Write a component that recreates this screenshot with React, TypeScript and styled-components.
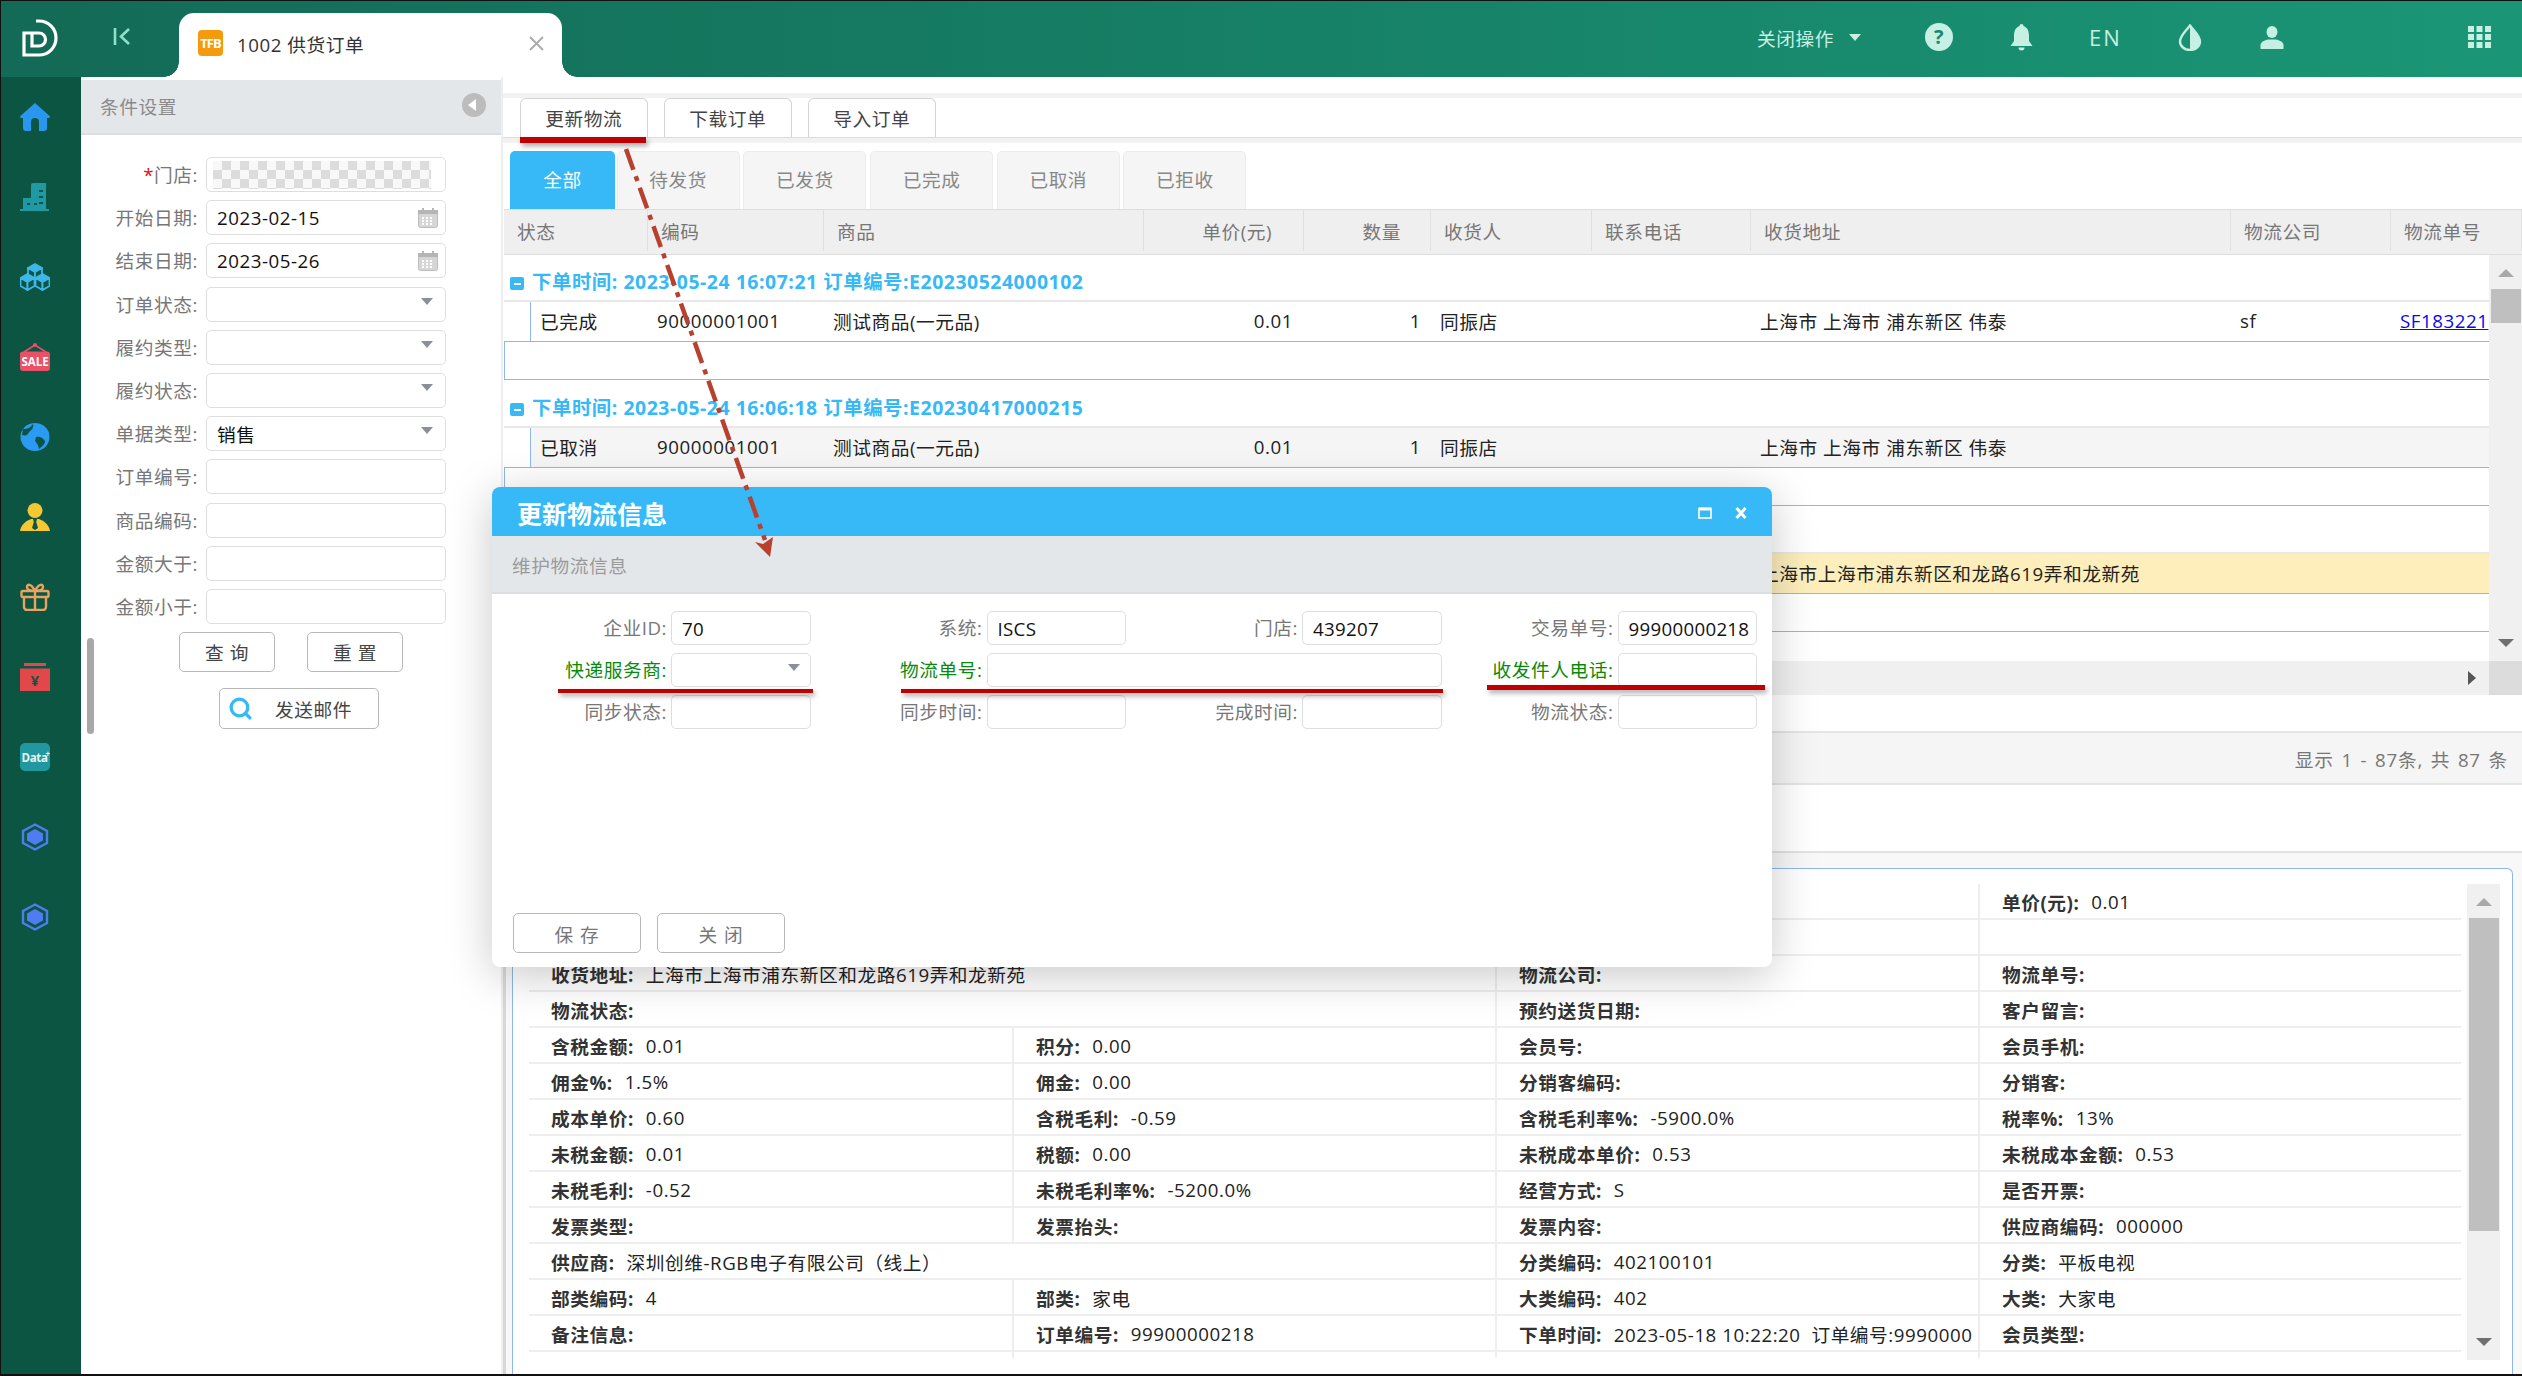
import { Fragment } from "react";
import styled, { createGlobalStyle } from "styled-components";
import { Search } from "lucide-react";

const GlobalStyle = createGlobalStyle`
  html, body {
    margin: 0;
    padding: 0;
    background: #fff;
  }
  body {
    font-family: "Open Sans", "Noto Sans CJK SC", sans-serif;
    font-size: 18.7px;
    letter-spacing: 0.55px;
    color: #222;
    overflow: hidden;
  }
  * {
    box-sizing: border-box;
  }
`;

const Frame = styled.div`
  position: relative;
  width: 2522px;
  height: 1376px;
  border-top: 1px solid #111;
  border-left: 1px solid #111;
  border-bottom: 2px solid #111;
  display: flex;
  flex-direction: column;
  overflow: hidden;
`;

const TopBar = styled.header`
  height: 76px;
  flex: none;
  display: flex;
  background: linear-gradient(90deg, #136a56, #1a9676);
`;

const LogoCell = styled.div`
  width: 80px;
  display: flex;
  align-items: center;
  padding-left: 21px;
  padding-bottom: 2px;
`;

const CollapseCell = styled.div`
  width: 98px;
  display: flex;
  align-items: center;
  padding-left: 32px;
  padding-bottom: 6px;
`;

const PageTab = styled.div`
  position: relative;
  width: 383px;
  margin-top: 12px;
  background: #fff;
  border-radius: 15px 15px 0 0;
  display: flex;
  align-items: center;
  padding: 0 18px 4px 19px;
  &::before,
  &::after {
    content: "";
    position: absolute;
    bottom: 0;
    width: 15px;
    height: 15px;
  }
  &::before {
    left: -15px;
    background: radial-gradient(circle at 0 0, transparent 14.5px, #fff 15px);
  }
  &::after {
    right: -15px;
    background: radial-gradient(circle at 100% 0, transparent 14.5px, #fff 15px);
  }
`;

const TabBadge = styled.span`
  width: 25px;
  height: 26px;
  border-radius: 4px;
  background: #f59a0c;
  color: #fff;
  font-size: 13px;
  font-weight: 700;
  letter-spacing: -1px;
  display: flex;
  align-items: center;
  justify-content: center;
`;

const TabTitle = styled.span`
  margin-left: 14px;
  flex: 1;
  color: #333;
`;

const TopActions = styled.div`
  margin-left: auto;
  display: flex;
  align-items: center;
  padding: 0 31px 4px 0;
  color: #c5f0e3;
`;

const LangText = styled.span`
  margin-left: 56px;
  font-size: 22px;
  letter-spacing: 2px;
  width: 32px;
`;

const ActionIcon = styled.span<{ $left: number }>`
  margin-left: ${(p) => p.$left}px;
  display: flex;
`;

const Workspace = styled.div`
  flex: 1;
  min-height: 0;
  display: flex;
`;

const SideNav = styled.nav`
  width: 80px;
  flex: none;
  background: #0c5543;
  display: flex;
  flex-direction: column;
`;

const NavItem = styled.div`
  height: 80px;
  display: flex;
  align-items: center;
  justify-content: center;
  padding-right: 12px;
`;

const FilterPanel = styled.aside`
  position: relative;
  width: 422px;
  flex: none;
  padding-top: 3px;
  border-right: 2px solid #eee;
`;

const FilterHead = styled.div`
  height: 55px;
  background: #e4e7ea;
  border-bottom: 2px solid #dcdfe2;
  display: flex;
  align-items: center;
  justify-content: space-between;
  padding: 0 15px 3px 19px;
  color: #8a8a8a;
`;

const BackDot = styled.span`
  width: 24px;
  height: 24px;
  border-radius: 50%;
  background: #bcbcbc;
  display: flex;
  align-items: center;
  justify-content: center;
  &::before {
    content: "";
    margin-right: 4px;
    border-style: solid;
    border-width: 6px 8px 6px 0;
    border-color: transparent #fff transparent transparent;
  }
`;

const FilterForm = styled.div`
  display: grid;
  grid-template-columns: 117px 240px;
  column-gap: 8px;
  row-gap: 8.2px;
  grid-auto-rows: 35px;
  padding-top: 22px;
`;

const FilterLabel = styled.label`
  text-align: right;
  line-height: 35px;
  color: #777;
  white-space: nowrap;
`;

const Star = styled.span`
  color: #e01010;
`;

const FieldBox = styled.div`
  border: 1.5px solid #dedede;
  border-radius: 5px;
  background: #fff;
  display: flex;
  align-items: center;
  justify-content: space-between;
  padding: 0 10px;
  color: #111;
  white-space: nowrap;
  overflow: hidden;
`;

const Masked = styled.div`
  width: 100%;
  height: 28px;
  margin: 0 -5px 0 -4px;
  flex: none;
  background: conic-gradient(#dcdcdc 25%, #f8f8f8 0 50%, #dcdcdc 0 75%, #f8f8f8 0) 0 0 / 18px 18px;
`;

const Caret = styled.span`
  margin: -6px 2px 0 0;
  border-style: solid;
  border-width: 7px 6px 0 6px;
  border-color: #8a8f99 transparent transparent transparent;
`;

const TopCaret = styled(Caret)`
  margin: 0 0 0 15px;
  border-top-color: #c5f0e3;
`;

const CalendarSlot = styled.span`
  display: flex;
  margin-right: -3px;
`;

const PanelButtons = styled.div`
  display: flex;
  gap: 32px;
  padding: 8px 0 0 98px;
`;

const PlainButton = styled.button`
  width: 96px;
  height: 40px;
  background: #fff;
  border: 1.5px solid #b8b8b8;
  border-radius: 5px;
  font: inherit;
  letter-spacing: inherit;
  color: #444;
  padding: 0;
`;

const MailButton = styled(PlainButton)`
  width: 160px;
  height: 41px;
  margin: 16px 0 0 138px;
  display: flex;
  align-items: center;
  padding-left: 8px;
  gap: 22px;
`;

const PanelScroll = styled.span`
  position: absolute;
  left: 6px;
  top: 561px;
  width: 7px;
  height: 96px;
  border-radius: 4px;
  background: #a8a8a8;
`;

const Main = styled.main`
  flex: 1;
  min-width: 0;
  display: flex;
  flex-direction: column;
`;

const WhiteStrip = styled.div`
  height: 16px;
  flex: none;
  background: #fff;
`;

const GreyStrip = styled.div`
  height: 5px;
  flex: none;
  background: #f2f2f2;
`;

const Toolbar = styled.div`
  height: 40px;
  flex: none;
  display: flex;
  gap: 16.5px;
  padding-left: 17px;
  border-bottom: 1px solid #ddd;
`;

const ToolButton = styled.button`
  position: relative;
  width: 127.5px;
  height: 39px;
  background: #fff;
  border: 1.5px solid #d4d4d4;
  border-bottom: none;
  border-radius: 6px 6px 0 0;
  font: inherit;
  letter-spacing: inherit;
  color: #444;
  padding: 0 0 2px;
`;

const RedMark = styled.span<{ $left: number; $top: number; $width: number; $height: number }>`
  position: absolute;
  left: ${(p) => p.$left}px;
  top: ${(p) => p.$top}px;
  width: ${(p) => p.$width}px;
  height: ${(p) => p.$height}px;
  background: #c00000;
  box-shadow: 2px 3px 5px rgba(0, 0, 0, 0.35);
  z-index: 3;
`;

const TabStrip = styled.div`
  height: 66px;
  flex: none;
  display: flex;
  gap: 3.7px;
  padding: 8px 0 0 7px;
`;

const StatusTab = styled.div<{ $active?: boolean }>`
  width: ${(p) => (p.$active ? "105px" : "123px")};
  margin-right: ${(p) => (p.$active ? "-2px" : "0")};
  background: ${(p) => (p.$active ? "#37b9f7" : "#f5f5f5")};
  color: ${(p) => (p.$active ? "#fff" : "#888")};
  border: 1px solid ${(p) => (p.$active ? "#37b9f7" : "#ececec")};
  border-bottom: none;
  border-radius: 5px 5px 0 0;
  display: flex;
  align-items: center;
  justify-content: center;
  padding-bottom: 4px;
`;

const colTemplate = "144px 176px 320px 160px 127px 161px 159px 480px 160px 131px";

const HeadRow = styled.div`
  height: 46px;
  flex: none;
  margin-left: 1px;
  display: grid;
  grid-template-columns: ${colTemplate};
  background: #efefef;
  border-top: 1.5px solid #dedede;
  border-bottom: 1.5px solid #dedede;
  color: #777;
`;

const HeadCell = styled.div<{ $right?: number }>`
  display: flex;
  align-items: center;
  justify-content: ${(p) => (p.$right ? "flex-end" : "flex-start")};
  padding: ${(p) => (p.$right ? `0 ${p.$right}px 0 0` : "0 0 0 13px")};
  border-right: 1px solid #e0e0e0;
  margin: 0 0 3px;
  white-space: nowrap;
`;

const TableBody = styled.div`
  height: 406px;
  flex: none;
  display: flex;
  margin-left: 1px;
`;

const RowsClip = styled.div`
  flex: 1;
  min-width: 0;
  overflow: hidden;
`;

const GroupRow = styled.div`
  height: 48px;
  border-bottom: 2px solid #e8e8e8;
  display: flex;
  align-items: flex-end;
  padding: 0 0 5px 6px;
  gap: 8px;
  color: #37b9f7;
  font-size: 19.4px;
  font-weight: 700;
  white-space: nowrap;
  &:first-child {
    height: 47px;
  }
`;

const MinusBox = styled.span`
  width: 14px;
  height: 13px;
  margin-bottom: 5px;
  border-radius: 2px;
  background: #37b9f7;
  display: flex;
  align-items: center;
  justify-content: center;
  &::before {
    content: "";
    width: 7px;
    height: 2px;
    background: #fff;
  }
`;

const DataRow = styled.div<{ $tone?: "plain" | "grey" | "yellow" }>`
  height: 39px;
  margin-left: 26px;
  display: grid;
  grid-template-columns: 118px 176px 320px 160px 127px 161px 159px 480px 160px 131px;
  border-left: 1px solid #8cb8ec;
  background: ${(p) => (p.$tone === "grey" ? "#f5f5f5" : p.$tone === "yellow" ? "#fdeebb" : "#fff")};
  color: #222;
`;

const DataCell = styled.div<{ $right?: number; $lead?: boolean }>`
  display: flex;
  align-items: center;
  justify-content: ${(p) => (p.$right ? "flex-end" : "flex-start")};
  padding: ${(p) =>
    p.$right ? `0 ${p.$right}px 2px 0` : `0 0 2px ${p.$lead ? 9 : 8}px`};
  white-space: nowrap;
`;

const TrackLink = styled.a`
  color: #0a0ae6;
  text-decoration: underline;
`;

const EmptyRow = styled.div`
  height: 39px;
  border: 1.5px solid #8cb8ec;
  border-right: none;
`;

const ScrollTrack = styled.div`
  width: 33px;
  flex: none;
  background: #f0f0f0;
  display: flex;
  flex-direction: column;
  align-items: center;
  padding: 14px 0;
  &::after {
    content: "";
    margin-top: auto;
    border-style: solid;
    border-width: 8px 8px 0 8px;
    border-color: #6f6f6f transparent transparent transparent;
  }
`;

const ScrollUp = styled.span`
  border-style: solid;
  border-width: 0 8px 8px 8px;
  border-color: transparent transparent #a9a9a9 transparent;
`;

const ScrollThumb = styled.span<{ $height: number }>`
  width: 30px;
  height: ${(p) => p.$height}px;
  margin-top: 12px;
  background: #bfbfbf;
`;

const HScroll = styled.div`
  height: 34px;
  flex: none;
  margin-left: 1px;
  background: #f0f0f0;
  display: flex;
  justify-content: flex-end;
  align-items: center;
`;

const HArrow = styled.span`
  margin-right: 13px;
  border-style: solid;
  border-width: 7px 0 7px 8px;
  border-color: transparent transparent transparent #555;
`;

const HCorner = styled.span`
  width: 33px;
  height: 34px;
  background: #dcdcdc;
`;

const BlankGap = styled.div<{ $height: number; $line?: boolean }>`
  height: ${(p) => p.$height}px;
  flex: none;
  background: #fff;
  border-bottom: ${(p) => (p.$line ? "2px solid #e2e2e2" : "none")};
`;

const Pager = styled.div`
  height: 54px;
  flex: none;
  background: #f5f5f5;
  border-top: 2px solid #e4e4e4;
  border-bottom: 2px solid #e4e4e4;
  display: flex;
  align-items: center;
  justify-content: flex-end;
  padding-right: 14px;
  color: #777;
  letter-spacing: 0.8px;
  word-spacing: 2px;
`;

const DetailWrap = styled.div`
  flex: 1;
  min-height: 0;
  display: flex;
  background: #f8f8f8;
  padding: 15px 9px 0 9px;
  box-shadow: inset 3px 0 0 #d8d8d8;
`;

const DetailPanel = styled.section`
  flex: 1;
  min-width: 0;
  background: #fff;
  border: 1.5px solid #8cb8ec;
  border-bottom: none;
  border-radius: 0 6px 0 0;
  display: flex;
  padding: 15px 12px 14px 16px;
  gap: 6px;
`;

const DetailRows = styled.div`
  width: 1932px;
  flex: none;
  overflow: hidden;
`;

const DetailRow = styled.div`
  height: 36px;
  display: grid;
  grid-template-columns: repeat(4, 1fr);
  border-bottom: 2px solid #eeeeee;
`;

const DetailCell = styled.div<{ $span?: number; $first?: boolean }>`
  grid-column: span ${(p) => p.$span ?? 1};
  min-width: 0;
  display: flex;
  align-items: center;
  padding-left: 22px;
  border-left: ${(p) => (p.$first ? "none" : "2px solid #eeeeee")};
  white-space: pre;
  overflow: hidden;
  color: #222;
`;

const FieldName = styled.b`
  font-weight: 700;
  color: #333;
  margin-right: 12px;
`;

const DetailStub = styled.div`
  height: 6px;
  display: grid;
  grid-template-columns: repeat(4, 1fr);
  & > span + span {
    border-left: 2px solid #eeeeee;
  }
`;

const ModalShell = styled.div`
  position: absolute;
  left: 491px;
  top: 486px;
  width: 1280px;
  height: 480px;
  background: #fff;
  border-radius: 8px;
  box-shadow: 0 8px 45px rgba(0, 0, 0, 0.22);
  display: flex;
  flex-direction: column;
  overflow: hidden;
  z-index: 5;
`;

const ModalHead = styled.div`
  height: 49px;
  flex: none;
  background: #37b9f7;
  color: #fff;
  display: flex;
  align-items: center;
  padding: 2px 25px 0 25px;
  font-size: 25px;
  font-weight: 700;
  letter-spacing: 0;
`;

const ModalTools = styled.div`
  margin-left: auto;
  display: flex;
  align-items: center;
  gap: 23px;
`;

const ModalSub = styled.div`
  height: 58px;
  flex: none;
  background: #e4e7ea;
  border-bottom: 2px solid #dcdfe2;
  display: flex;
  align-items: center;
  padding-left: 20px;
  color: #9a9a9a;
`;

const ModalForm = styled.div`
  flex: 1;
  display: grid;
  grid-template-columns: repeat(4, 172px 139.5px);
  column-gap: 2px;
  grid-auto-rows: 34px;
  row-gap: 8px;
  padding: 17px 0 0 5px;
`;

const ModalLabel = styled.label<{ $accent?: boolean }>`
  text-align: right;
  line-height: 34px;
  white-space: nowrap;
  padding-right: 2px;
  color: ${(p) => (p.$accent ? "#0a8a0a" : "#777")};
`;

const ModalField = styled(FieldBox)<{ $span?: number }>`
  grid-column: span ${(p) => p.$span ?? 1};
  padding: 0 8px 0 10px;
  letter-spacing: 0.3px;
`;

const ModalFoot = styled.div`
  flex: none;
  display: flex;
  gap: 16px;
  padding: 0 0 14px 21px;
`;

const FootButton = styled(PlainButton)`
  width: 128px;
  color: #777;
  letter-spacing: 1px;
`;

const ArrowLayer = styled.svg`
  position: absolute;
  left: -1px;
  top: -1px;
  width: 2522px;
  height: 1376px;
  pointer-events: none;
  z-index: 6;
`;

const columns = [
  { name: "状态" },
  { name: "编码" },
  { name: "商品" },
  { name: "单价(元)", right: 31 },
  { name: "数量", right: 29 },
  { name: "收货人" },
  { name: "联系电话" },
  { name: "收货地址" },
  { name: "物流公司" },
  { name: "物流单号" },
];

type DetailEntry = { k: string; v?: string; span?: number };

const detailRows: DetailEntry[][] = [
  [{ k: "", span: 3 }, { k: "单价(元):", v: "0.01" }],
  [{ k: "", span: 3 }, { k: "" }],
  [{ k: "收货地址:", v: "上海市上海市浦东新区和龙路619弄和龙新苑", span: 2 }, { k: "物流公司:" }, { k: "物流单号:" }],
  [{ k: "物流状态:", span: 2 }, { k: "预约送货日期:" }, { k: "客户留言:" }],
  [{ k: "含税金额:", v: "0.01" }, { k: "积分:", v: "0.00" }, { k: "会员号:" }, { k: "会员手机:" }],
  [{ k: "佣金%:", v: "1.5%" }, { k: "佣金:", v: "0.00" }, { k: "分销客编码:" }, { k: "分销客:" }],
  [{ k: "成本单价:", v: "0.60" }, { k: "含税毛利:", v: "-0.59" }, { k: "含税毛利率%:", v: "-5900.0%" }, { k: "税率%:", v: "13%" }],
  [{ k: "未税金额:", v: "0.01" }, { k: "税额:", v: "0.00" }, { k: "未税成本单价:", v: "0.53" }, { k: "未税成本金额:", v: "0.53" }],
  [{ k: "未税毛利:", v: "-0.52" }, { k: "未税毛利率%:", v: "-5200.0%" }, { k: "经营方式:", v: "S" }, { k: "是否开票:" }],
  [{ k: "发票类型:" }, { k: "发票抬头:" }, { k: "发票内容:" }, { k: "供应商编码:", v: "000000" }],
  [{ k: "供应商:", v: "深圳创维-RGB电子有限公司（线上）", span: 2 }, { k: "分类编码:", v: "402100101" }, { k: "分类:", v: "平板电视" }],
  [{ k: "部类编码:", v: "4" }, { k: "部类:", v: "家电" }, { k: "大类编码:", v: "402" }, { k: "大类:", v: "大家电" }],
  [{ k: "备注信息:" }, { k: "订单编号:", v: "99900000218" }, { k: "下单时间:", v: "2023-05-18 10:22:20  订单编号:9990000" }, { k: "会员类型:" }],
];

const Logo = () => (
  <svg width="38" height="38" viewBox="0 0 38 38" fill="none" stroke="#fff" strokeWidth="3.2">
    <path d="M14 2 h3 a17 17 0 0 1 0 34 H2 V14 H17 a6.5 6.5 0 0 1 0 13 H10 V15" />
  </svg>
);

const CollapseIcon = () => (
  <svg width="18" height="17" viewBox="0 0 18 17" fill="none" stroke="#8fe0c8" strokeWidth="2.6">
    <path d="M2 0 V17 M16 1 L8 8.5 L16 16" />
  </svg>
);

const mint = "#c5f0e3";

const HelpIcon = () => (
  <svg width="28" height="28" viewBox="0 0 28 28">
    <circle cx="14" cy="14" r="14" fill={mint} />
    <text x="14" y="21" textAnchor="middle" fontSize="20" fontWeight="700" fill="#1a8a6e" fontFamily="Open Sans">?</text>
  </svg>
);

const BellIcon = () => (
  <svg width="23" height="27" viewBox="0 0 23 27" fill={mint}>
    <path d="M11.5 0 a2 2 0 0 1 2 2 C18 3.5 19 8 19 12 V17 L22.5 22 H0.5 L4 17 V12 C4 8 5 3.5 9.5 2 a2 2 0 0 1 2 -2 Z" />
    <path d="M8.5 23.5 H14.5 a3 3 0 0 1 -6 0 Z" />
  </svg>
);

const ContrastIcon = () => (
  <svg width="24" height="27" viewBox="0 0 24 27" fill="none">
    <path d="M12 1.5 C17 8 22 12 22 17.5 A10 8.5 0 0 1 2 17.5 C2 12 7 8 12 1.5 Z" fill="none" stroke={mint} strokeWidth="2.4" />
    <path d="M12 1.5 C17 8 22 12 22 17.5 A10 8.5 0 0 1 12 26 Z" fill={mint} />
  </svg>
);

const UserIcon = () => (
  <svg width="24" height="23" viewBox="0 0 24 23" fill={mint}>
    <ellipse cx="12" cy="6" rx="5.5" ry="6" />
    <path d="M0.5 23 V19 C0.5 16 5 14 8 13.5 H16 C19 14 23.5 16 23.5 19 V23 Z" />
  </svg>
);

const GridIcon = () => (
  <svg width="23" height="22" viewBox="0 0 23 22" fill={mint}>
    {[0, 8.5, 17].map((x) =>
      [0, 8, 16].map((y) => <rect key={`${x}-${y}`} x={x} y={y} width="6" height="6" />)
    )}
  </svg>
);

const HomeIcon = () => (
  <svg width="30" height="28" viewBox="0 0 30 28" fill="#2a97ee">
    <path d="M15 0 L29.6 13 a1.2 1.2 0 0 1 -0.8 2 H27 V25 a3 3 0 0 1 -3 3 H19 V19 a4 4 0 0 0 -8 0 V28 H6 a3 3 0 0 1 -3 -3 V15 H1.2 a1.2 1.2 0 0 1 -0.8 -2 Z" />
  </svg>
);

const BuildingIcon = () => (
  <svg width="30" height="28" viewBox="0 0 30 28">
    <path d="M11 2 Q11 0 13 0 H26 V26 H29 V28 H0 V26 H3 V15 H11 Z" fill="#1f99a4" />
    <g fill="#0c5543">
      <rect x="19" y="7" width="4" height="2" />
      <rect x="19" y="13" width="4" height="2" />
      <rect x="19" y="19" width="4" height="2" />
      <rect x="7" y="20" width="3" height="2" />
      <rect x="14" y="20" width="3" height="2" />
    </g>
  </svg>
);

const Cube = ({ x, y }: { x: number; y: number }) => (
  <g transform={`translate(${x} ${y})`} stroke="#3db6e8" strokeWidth="1.8" strokeLinejoin="round">
    <path d="M0 -8 L7 -4 L0 0 L-7 -4 Z" fill="#3db6e8" />
    <path d="M-7 -4 L0 0 V8 L-7 4 Z" fill="#0c5543" />
    <path d="M7 -4 L0 0 V8 L7 4 Z" fill="#0c5543" />
  </g>
);

const CubesIcon = () => (
  <svg width="30" height="28" viewBox="0 0 30 28">
    <Cube x={15} y={9} />
    <Cube x={7.5} y={19} />
    <Cube x={22.5} y={19} />
  </svg>
);

const SaleIcon = () => (
  <svg width="30" height="28" viewBox="0 0 30 28">
    <circle cx="15" cy="2" r="2" fill="#ea5066" />
    <path d="M4 9 L15 2 L26 9" fill="none" stroke="#ea5066" strokeWidth="1.5" />
    <rect x="0" y="8.5" width="30" height="19.5" rx="3" fill="#ea5066" />
    <text x="15" y="23" textAnchor="middle" fontSize="11.5" fontWeight="700" fill="#fff" fontFamily="Open Sans" letterSpacing="0">SALE</text>
  </svg>
);

const GlobeIcon = () => (
  <svg width="30" height="28" viewBox="0 0 30 28">
    <ellipse cx="15" cy="14" rx="14.5" ry="14" fill="#2b9af3" />
    <path d="M3 6 C8 6 11 4 13 1 C14 4 12 7 9 9 C8 12 6 13 2 12 Z" fill="#0c5543" />
    <path d="M16 14 C20 13 23 15 25 18 C25 22 21 24 19 26 C18 22 17 20 15 18 Z" fill="#0c5543" />
  </svg>
);

const PersonIcon = () => (
  <svg width="30" height="28" viewBox="0 0 30 28">
    <circle cx="15" cy="7.5" r="7.5" fill="#f3c832" />
    <path d="M0 28 C1 21 7 17.5 11 16 H19 C23 17.5 29 21 30 28 Z" fill="#f3c832" />
    <path d="M13 16 H17 L16.2 19 L18 25 L15 27 L12 25 L13.8 19 Z" fill="#0c5543" />
  </svg>
);

const GiftIcon = () => (
  <svg width="30" height="28" viewBox="0 0 30 28" fill="none" stroke="#e8a45e" strokeWidth="2.4" strokeLinejoin="round">
    <rect x="1.5" y="8" width="27" height="6" rx="1.5" />
    <path d="M4 14 V24 a3 3 0 0 0 3 3 H23 a3 3 0 0 0 3 -3 V14" />
    <path d="M15 8 V27" />
    <path d="M15 8 C11 8 7 7 7 4 C7 1 11 0 15 8 C19 0 23 1 23 4 C23 7 19 8 15 8 Z" />
  </svg>
);

const PacketIcon = () => (
  <svg width="30" height="28" viewBox="0 0 30 28">
    <rect x="4" y="0" width="22" height="3" fill="#e2474b" />
    <rect x="0" y="5.5" width="30" height="22.5" fill="#e2474b" />
    <text x="15" y="22.5" textAnchor="middle" fontSize="15" fontWeight="700" fill="#0c5543" fontFamily="Open Sans">¥</text>
  </svg>
);

const DataIcon = () => (
  <svg width="30" height="28" viewBox="0 0 30 28">
    <rect width="30" height="28" rx="5" fill="#21989f" />
    <text x="1.5" y="18.5" fontSize="11.5" fontWeight="700" fill="#e8f6f6" fontFamily="Open Sans" letterSpacing="-0.3">Data</text>
    <text x="25.5" y="14" fontSize="8" fontWeight="700" fill="#e8f6f6" fontFamily="Open Sans">+</text>
  </svg>
);

const HexIcon = () => (
  <svg width="28" height="28" viewBox="0 0 28 28">
    <path d="M14 1.5 L26 8 V20 L14 26.5 L2 20 V8 Z" fill="none" stroke="#4f7cf0" strokeWidth="2.4" />
    <path d="M14 6 L22 10.5 V17.5 L14 22 L6 17.5 V10.5 Z" fill="#4f7cf0" />
  </svg>
);

const CalendarIcon = () => (
  <svg width="20" height="20" viewBox="0 0 20 20">
    <rect x="0.5" y="2.5" width="19" height="17" rx="2" fill="#d6d6d6" stroke="#bdbdbd" />
    <rect x="0" y="2" width="20" height="4" fill="#b5b5b5" />
    <rect x="4" y="0" width="2" height="4" fill="#b5b5b5" />
    <rect x="14" y="0" width="2" height="4" fill="#b5b5b5" />
    <g fill="#fff">
      {[4, 8, 12].map((x) =>
        [9, 12, 15].map((y) => <rect key={`${x}-${y}`} x={x} y={y} width="2" height="2" />)
      )}
    </g>
  </svg>
);

const MaxIcon = () => (
  <svg width="14" height="12" viewBox="0 0 14 12" fill="none" stroke="#fff">
    <rect x="1" y="1.5" width="12" height="9.5" strokeWidth="1.6" />
    <path d="M1 2 H13" strokeWidth="3" />
  </svg>
);

const CloseIcon = () => (
  <svg width="12" height="12" viewBox="0 0 12 12" fill="none" stroke="#fff" strokeWidth="3">
    <path d="M1.5 1 L10.5 11 M10.5 1 L1.5 11" />
  </svg>
);

const TabClose = () => (
  <svg width="15" height="15" viewBox="0 0 15 15" fill="none" stroke="#aaa" strokeWidth="1.8">
    <path d="M1 1 L14 14 M14 1 L1 14" />
  </svg>
);

const navIcons = [
  HomeIcon, BuildingIcon, CubesIcon, SaleIcon, GlobeIcon, PersonIcon,
  GiftIcon, PacketIcon, DataIcon, HexIcon, HexIcon,
];

const filterFields: { label: string; value?: string; kind?: "date" | "select" }[] = [
  { label: "开始日期:", value: "2023-02-15", kind: "date" },
  { label: "结束日期:", value: "2023-05-26", kind: "date" },
  { label: "订单状态:", kind: "select" },
  { label: "履约类型:", kind: "select" },
  { label: "履约状态:", kind: "select" },
  { label: "单据类型:", value: "销售", kind: "select" },
  { label: "订单编号:" },
  { label: "商品编码:" },
  { label: "金额大于:" },
  { label: "金额小于:" },
];

const OrderCells = ({ status, shipped }: { status: string; shipped?: boolean }) => (
  <>
    <DataCell $lead>{status}</DataCell>
    <DataCell>90000001001</DataCell>
    <DataCell>测试商品(一元品)</DataCell>
    <DataCell $right={12}>0.01</DataCell>
    <DataCell $right={11}>1</DataCell>
    <DataCell>同振店</DataCell>
    <DataCell />
    <DataCell>上海市 上海市 浦东新区 伟泰</DataCell>
    <DataCell>{shipped && "sf"}</DataCell>
    <DataCell>{shipped && <TrackLink>SF183221</TrackLink>}</DataCell>
  </>
);

export default function App() {
  return (
    <>
      <GlobalStyle />
      <Frame>
        <TopBar>
          <LogoCell>
            <Logo />
          </LogoCell>
          <CollapseCell>
            <CollapseIcon />
          </CollapseCell>
          <PageTab>
            <TabBadge>TFB</TabBadge>
            <TabTitle>1002 供货订单</TabTitle>
            <TabClose />
          </PageTab>
          <TopActions>
            <span>关闭操作</span>
            <TopCaret />
            <ActionIcon $left={64}>
              <HelpIcon />
            </ActionIcon>
            <ActionIcon $left={57}>
              <BellIcon />
            </ActionIcon>
            <LangText>EN</LangText>
            <ActionIcon $left={57}>
              <ContrastIcon />
            </ActionIcon>
            <ActionIcon $left={58}>
              <UserIcon />
            </ActionIcon>
            <ActionIcon $left={184}>
              <GridIcon />
            </ActionIcon>
          </TopActions>
        </TopBar>
        <Workspace>
          <SideNav>
            {navIcons.map((Icon, i) => (
              <NavItem key={i}>
                <Icon />
              </NavItem>
            ))}
          </SideNav>
          <FilterPanel>
            <PanelScroll />
            <FilterHead>
              条件设置
              <BackDot />
            </FilterHead>
            <FilterForm>
              <FilterLabel>
                <Star>*</Star>门店:
              </FilterLabel>
              <FieldBox>
                <Masked />
              </FieldBox>
              {filterFields.map((f) => (
                <Fragment key={f.label}>
                  <FilterLabel>{f.label}</FilterLabel>
                  <FieldBox>
                    <span>{f.value}</span>
                    {f.kind === "date" && (
                      <CalendarSlot>
                        <CalendarIcon />
                      </CalendarSlot>
                    )}
                    {f.kind === "select" && <Caret />}
                  </FieldBox>
                </Fragment>
              ))}
            </FilterForm>
            <PanelButtons>
              <PlainButton>查 询</PlainButton>
              <PlainButton>重 置</PlainButton>
            </PanelButtons>
            <MailButton>
              <Search size={25} strokeWidth={3.2} color="#37b9f7" />
              发送邮件
            </MailButton>
          </FilterPanel>
          <Main>
            <WhiteStrip />
            <GreyStrip />
            <Toolbar>
              <ToolButton>
                更新物流
                <RedMark $left={-1} $top={38} $width={126} $height={6} />
              </ToolButton>
              <ToolButton>下载订单</ToolButton>
              <ToolButton>导入订单</ToolButton>
            </Toolbar>
            <GreyStrip />
            <TabStrip>
              <StatusTab $active>全部</StatusTab>
              <StatusTab>待发货</StatusTab>
              <StatusTab>已发货</StatusTab>
              <StatusTab>已完成</StatusTab>
              <StatusTab>已取消</StatusTab>
              <StatusTab>已拒收</StatusTab>
            </TabStrip>
            <HeadRow>
              {columns.map((c) => (
                <HeadCell key={c.name} $right={c.right}>
                  {c.name}
                </HeadCell>
              ))}
            </HeadRow>
            <TableBody>
              <RowsClip>
                <GroupRow>
                  <MinusBox />
                  下单时间: 2023-05-24 16:07:21 订单编号:E20230524000102
                </GroupRow>
                <DataRow>
                  <OrderCells status="已完成" shipped />
                </DataRow>
                <EmptyRow />
                <GroupRow>
                  <MinusBox />
                  下单时间: 2023-05-24 16:06:18 订单编号:E20230417000215
                </GroupRow>
                <DataRow $tone="grey">
                  <OrderCells status="已取消" />
                </DataRow>
                <EmptyRow />
                <GroupRow />
                <DataRow $tone="yellow">
                  <DataCell />
                  <DataCell />
                  <DataCell />
                  <DataCell />
                  <DataCell />
                  <DataCell />
                  <DataCell />
                  <DataCell>上海市上海市浦东新区和龙路619弄和龙新苑</DataCell>
                </DataRow>
                <EmptyRow />
              </RowsClip>
              <ScrollTrack>
                <ScrollUp />
                <ScrollThumb $height={34} />
              </ScrollTrack>
            </TableBody>
            <HScroll>
              <HArrow />
              <HCorner />
            </HScroll>
            <BlankGap $height={36} />
            <Pager>显示 1 - 87条, 共 87 条</Pager>
            <BlankGap $height={68} $line />
            <DetailWrap>
              <DetailPanel>
                <DetailRows>
                  {detailRows.map((row, i) => (
                    <DetailRow key={i}>
                      {row.map((cell, j) => (
                        <DetailCell key={j} $span={cell.span} $first={j === 0}>
                          {cell.k && <FieldName>{cell.k}</FieldName>}
                          {cell.v}
                        </DetailCell>
                      ))}
                    </DetailRow>
                  ))}
                  <DetailStub>
                    <span />
                    <span />
                    <span />
                    <span />
                  </DetailStub>
                </DetailRows>
                <ScrollTrack>
                  <ScrollUp />
                  <ScrollThumb $height={313} />
                </ScrollTrack>
              </DetailPanel>
            </DetailWrap>
          </Main>
        </Workspace>

        <ModalShell>
          <ModalHead>
            更新物流信息
            <ModalTools>
              <MaxIcon />
              <CloseIcon />
            </ModalTools>
          </ModalHead>
          <ModalSub>维护物流信息</ModalSub>
          <ModalForm>
            <ModalLabel>企业ID:</ModalLabel>
            <ModalField>70</ModalField>
            <ModalLabel>系统:</ModalLabel>
            <ModalField>ISCS</ModalField>
            <ModalLabel>门店:</ModalLabel>
            <ModalField>439207</ModalField>
            <ModalLabel>交易单号:</ModalLabel>
            <ModalField>99900000218</ModalField>

            <ModalLabel $accent>快递服务商:</ModalLabel>
            <ModalField>
              <span />
              <Caret />
            </ModalField>
            <ModalLabel $accent>物流单号:</ModalLabel>
            <ModalField $span={3} />
            <ModalLabel $accent>收发件人电话:</ModalLabel>
            <ModalField />

            <ModalLabel>同步状态:</ModalLabel>
            <ModalField />
            <ModalLabel>同步时间:</ModalLabel>
            <ModalField />
            <ModalLabel>完成时间:</ModalLabel>
            <ModalField />
            <ModalLabel>物流状态:</ModalLabel>
            <ModalField />
          </ModalForm>
          <ModalFoot>
            <FootButton>保 存</FootButton>
            <FootButton>关 闭</FootButton>
          </ModalFoot>
          <RedMark $left={66} $top={202} $width={255} $height={4} />
          <RedMark $left={409} $top={202} $width={542} $height={4} />
          <RedMark $left={995} $top={198} $width={278} $height={5} />
        </ModalShell>

        <ArrowLayer viewBox="0 0 2522 1376">
          <path
            d="M626 149 L765 540"
            fill="none"
            stroke="#b8402f"
            strokeWidth="4.5"
            strokeDasharray="22 7 5 7"
          />
          <path d="M770 557 L755 542 L763 544 L773 537 Z" fill="#b8402f" />
        </ArrowLayer>
      </Frame>
    </>
  );
}
